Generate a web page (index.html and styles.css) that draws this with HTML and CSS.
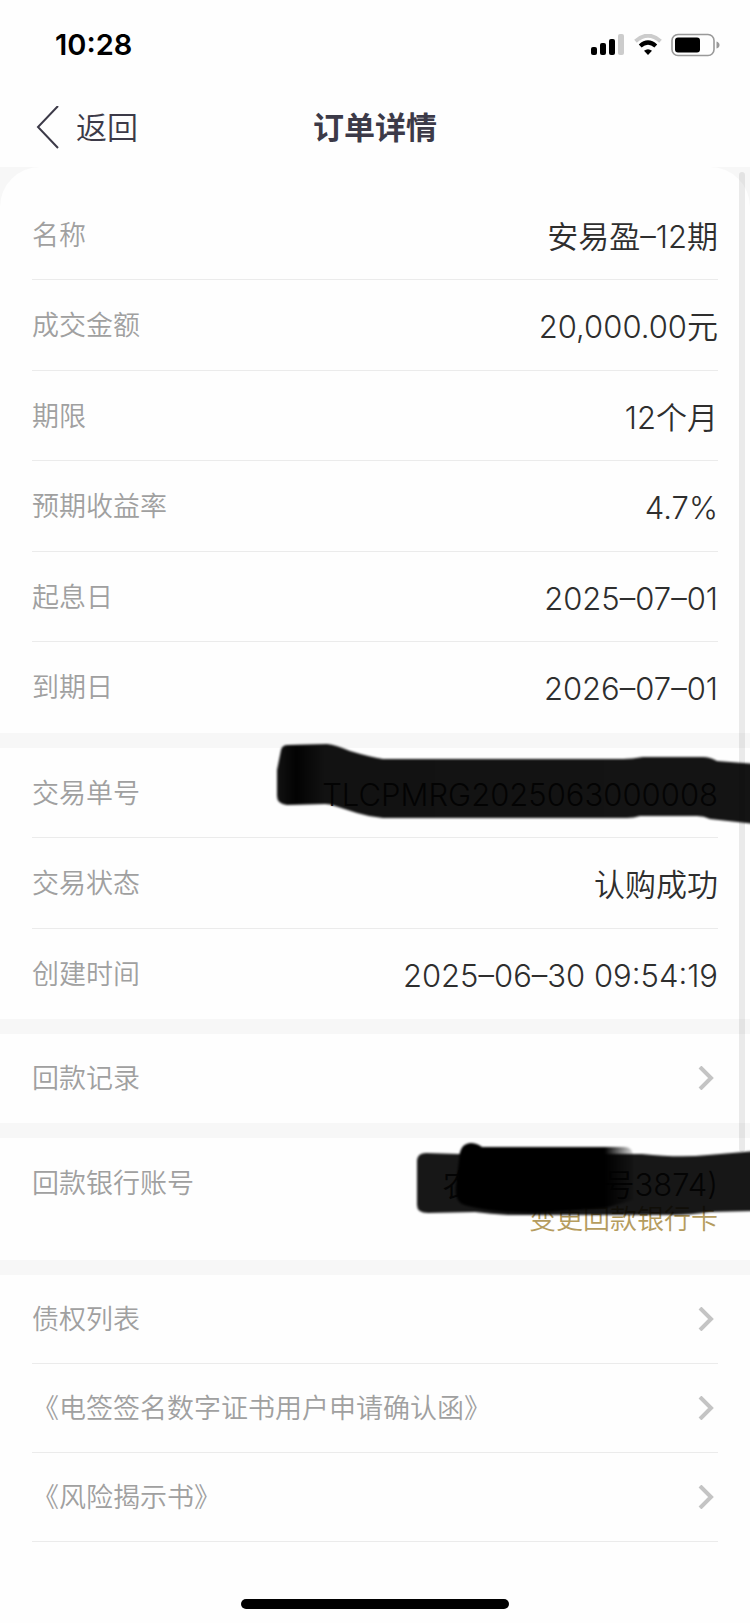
FILE: index.html
```html
<!DOCTYPE html>
<html lang="zh-CN">
<head>
    <meta charset="UTF-8">
    <meta name="viewport" content="width=device-width, initial-scale=1.0">
    <title>订单详情</title>
    <link rel="stylesheet" href="styles.css">
</head>
<body>
    <header>
        <div class="status-bar">
            <span class="time">10:28</span>
            <div class="status-icons">
                <svg width="34" height="22" viewBox="0 0 34 22">
                    <rect x="0" y="13" width="6" height="8" rx="2"/>
                    <rect x="9" y="9" width="6" height="12" rx="2"/>
                    <rect x="18" y="5" width="6" height="16" rx="2"/>
                    <rect x="27" y="0" width="6" height="21" rx="2" fill="#cccccc"/>
                </svg>
                <svg width="28" height="22" viewBox="0 0 28 22" fill="none">
                    <path d="M1.5 7.2Q14-3.8 26.5 7.2" stroke="#cccccc" stroke-width="4"/>
                    <path d="M6.2 12Q14 5 21.8 12" stroke="#000000" stroke-width="4.2"/>
                    <path d="M10 16.8Q14 13.6 18 16.8L14 21Z" fill="#000000"/>
                </svg>
                <svg width="49" height="24" viewBox="0 0 49 24">
                    <rect x="1" y="1.5" width="42" height="21" rx="6" fill="none" stroke="#999999" stroke-width="1.6"/>
                    <rect x="4" y="4.5" width="25" height="15" rx="3"/>
                    <path d="M45.5 8.5Q48.5 9.5 48.5 12T45.5 15.5Z" fill="#999999"/>
                </svg>
            </div>
        </div>
        <nav class="nav-bar">
            <button type="button" class="back">
                <svg width="24" height="44" viewBox="0 0 24 44" fill="none" stroke="#3c3a48" stroke-width="2">
                    <path d="M22 0L2 21L22 42"/>
                </svg>
                返回
            </button>
            <h1>订单详情</h1>
        </nav>
    </header>

    <main>
        <section class="card first">
            <div class="row"><span class="label">名称</span><span class="value">安易盈–12期</span></div>
            <div class="row"><span class="label">成交金额</span><span class="value">20,000.00元</span></div>
            <div class="row"><span class="label">期限</span><span class="value">12个月</span></div>
            <div class="row"><span class="label">预期收益率</span><span class="value">4.7%</span></div>
            <div class="row"><span class="label">起息日</span><span class="value">2025–07–01</span></div>
            <div class="row"><span class="label">到期日</span><span class="value">2026–07–01</span></div>
        </section>

        <section class="card">
            <div class="row"><span class="label">交易单号</span><span class="value">TLCPMRG2025063000008</span></div>
            <div class="row"><span class="label">交易状态</span><span class="value">认购成功</span></div>
            <div class="row"><span class="label">创建时间</span><span class="value">2025–06–30 09:54:19</span></div>
            <!-- marker stroke over the transaction number -->
            <svg class="marker marker-number" width="480" height="90" viewBox="0 0 480 90">
                <defs>
                    <filter id="soft" x="-5%" y="-10%" width="110%" height="120%"><feGaussianBlur stdDeviation="1"/></filter>
                    <linearGradient id="ink" x1="0" x2="1" y1="0" y2="0">
                        <stop offset="0" stop-color="#000" stop-opacity=".93"/>
                        <stop offset=".04" stop-color="#000" stop-opacity=".99"/>
                        <stop offset=".1" stop-color="#000" stop-opacity=".93"/>
                        <stop offset="1" stop-color="#000" stop-opacity=".92"/>
                    </linearGradient>
                </defs>
                <path filter="url(#soft)" fill="url(#ink)" d="M11 10Q12 5 18 5L57 4Q66 5 80 11Q100 17 113 19H353Q362 19 373 17H433Q440 17 447 21L486 24V84L440 79Q434 76 427 76H370Q364 78 357 78H113Q100 77 87 73L65 66Q60 64 55 64L17 65Q7 64 7 56V30Z"/>
            </svg>
        </section>

        <section class="card">
            <a class="row link-row" href="#records"><span class="label">回款记录</span>
                <svg class="arrow" width="16" height="24" viewBox="0 0 16 24"><path d="M2 1L13 12L2 23"/></svg>
            </a>
        </section>

        <section class="card">
            <div class="row"><span class="label">回款银行账号</span><span class="value account"><span>农</span><span>号3874)</span></span></div>
            <a class="change-card" href="#card">变更回款银行卡</a>
            <!-- two marker strokes over the account -->
            <svg class="marker marker-account" width="340" height="90" viewBox="0 0 340 90">
                <defs>
                    <linearGradient id="fade" x1="0" x2="1" y1="0" y2="0">
                        <stop offset="0" stop-color="#000"/>
                        <stop offset=".84" stop-color="#000"/>
                        <stop offset="1" stop-color="#000" stop-opacity=".15"/>
                    </linearGradient>
                </defs>
                <path filter="url(#soft)" fill="#000000" fill-opacity=".91" d="M7 24Q8 17 16 17L48 18H232Q270 22 298 19L346 15V75L300 76Q280 79 265 79H98Q80 78 65 76L18 77Q7 77 7 69Z"/>
                <path filter="url(#soft)" fill="url(#fade)" d="M50 16Q52 8 60 7Q67 7 72 11H214Q223 11 223 20V64L195 72L125 77Q85 77 58 70Q44 68 46 50Z"/>
            </svg>
        </section>

        <section class="card">
            <a class="row link-row" href="#claims"><span class="label">债权列表</span>
                <svg class="arrow" width="16" height="24" viewBox="0 0 16 24"><path d="M2 1L13 12L2 23"/></svg>
            </a>
            <a class="row link-row" href="#certificate"><span class="label">《电签签名数字证书用户申请确认函》</span>
                <svg class="arrow" width="16" height="24" viewBox="0 0 16 24"><path d="M2 1L13 12L2 23"/></svg>
            </a>
            <a class="row link-row last" href="#risk"><span class="label">《风险揭示书》</span>
                <svg class="arrow" width="16" height="24" viewBox="0 0 16 24"><path d="M2 1L13 12L2 23"/></svg>
            </a>
        </section>
        <div class="scroll-thumb"></div>
    </main>

    <footer>
        <div class="home-bar"></div>
    </footer>
</body>
</html>
```
FILE: styles.css
```css
* {
    box-sizing: border-box;
}

body {
    margin: 0;
    background-color: #fefefe;
    color: #2e2e2e;
    font-family: Inter, "Noto Sans CJK SC", "Noto Sans CJK SC DemiLight", sans-serif;
    font-weight: 350;
    line-height: 40px;
    overflow-x: hidden;
}

/* Status bar */
.status-bar {
    display: flex;
    align-items: center;
    justify-content: space-between;
    height: 88px;
    padding: 2px 30px 0 55px;
}

.time {
    font-size: 29px;
    font-weight: 600;
    color: #000000;
}

.status-icons {
    display: flex;
    align-items: center;
    gap: 9px;
}

/* Navigation */
.nav-bar {
    display: grid;
    grid-template-columns: 1fr auto 1fr;
    align-items: center;
    height: 79px;
    padding: 0 36px;
    color: #3c3a48;
}

.back {
    display: flex;
    align-items: center;
    gap: 16px;
    padding: 0;
    border: none;
    background: none;
    color: inherit;
    font-family: inherit;
    font-size: 31px;
    font-weight: 350;
    line-height: 40px;
    cursor: pointer;
}

h1 {
    margin: 0;
    font-size: 31px;
    font-weight: 700;
}

/* Cards */
main {
    position: relative;
    display: grid;
    gap: 15px;
    background-color: #f7f7f7;
}

.card {
    position: relative;
    padding: 0 32px;
    background-color: #fefefe;
}

.first {
    padding-top: 23px;
    border-radius: 40px 40px 0 0;
}

.row {
    display: flex;
    align-items: center;
    justify-content: space-between;
    height: 90px;
    border-bottom: 1px solid #ebebeb;
}

.row:nth-child(even) {
    height: 91px;
}

.row:last-of-type {
    border-bottom-color: transparent;
}

.link-row,
.link-row:nth-child(even) {
    height: 89px;
    text-decoration: none;
}

.link-row.last {
    border-bottom-color: #ebebeb;
}

.label {
    padding-top: 2px;
    font-size: 27px;
    color: #a0a0a0;
}

.value {
    padding-top: 4px;
    font-size: 31px;
}

.account {
    display: flex;
    gap: 130px;
}

.arrow {
    margin-right: 4px;
    fill: none;
    stroke: #c4c4c4;
    stroke-width: 4;
}

.change-card {
    display: block;
    margin-top: -18px;
    padding-bottom: 30px;
    font-size: 27px;
    line-height: 20px;
    text-align: right;
    text-decoration: none;
    color: #b59c5e;
}

/* Marker strokes */
.marker {
    position: absolute;
    right: 0;
    z-index: 2;
    pointer-events: none;
}

.marker-number {
    top: -8px;
}

.marker-account {
    top: -2px;
}

.scroll-thumb {
    position: absolute;
    z-index: 1;
    top: 5px;
    right: 5px;
    width: 6px;
    height: 980px;
    border-radius: 3px;
    background-color: rgba(0, 0, 0, 0.08);
}

/* Home indicator */
footer {
    padding: 57px 0 14px;
}

.home-bar {
    width: 268px;
    height: 10px;
    margin: 0 auto;
    border-radius: 5px;
    background-color: #000000;
}
```
